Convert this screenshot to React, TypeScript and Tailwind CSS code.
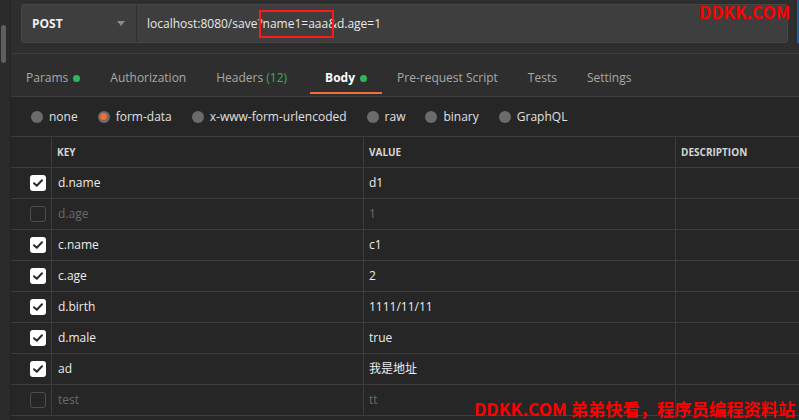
import React from "react";

const rows = [
  { on: true, k: "d.name", v: "d1" },
  { on: false, k: "d.age", v: "1" },
  { on: true, k: "c.name", v: "c1" },
  { on: true, k: "c.age", v: "2" },
  { on: true, k: "d.birth", v: "1111/11/11" },
  { on: true, k: "d.male", v: "true" },
  { on: true, k: "ad", v: "我是地址" },
  { on: false, k: "test", v: "tt" },
];

const Dot = () => <span className="inline-block w-[7px] h-[7px] rounded-full bg-[#2fb55b] ml-[5px]" />;

function Radio({ label, selected }: { label: string; selected?: boolean }) {
  return (
    <div className="flex items-center gap-[6px]">
      <span className="w-[12px] h-[12px] rounded-full bg-[#6b6b6b] flex items-center justify-center">
        {selected && <span className="w-[7px] h-[7px] rounded-full bg-[#f26b3a]" />}
      </span>
      <span className="text-[#e0e0e0]">{label}</span>
    </div>
  );
}

function Check({ on }: { on: boolean }) {
  if (!on)
    return <span className="block w-[16px] h-[16px] rounded-[3px] border border-[#4e4e4e]" />;
  return (
    <span className="flex w-[16px] h-[16px] rounded-[3px] bg-white items-center justify-center">
      <svg width="10" height="8" viewBox="0 0 10 8">
        <path d="M1 4.2 L3.8 6.8 L9 1.2" stroke="#2b2b2b" strokeWidth="2" fill="none" strokeLinecap="round" strokeLinejoin="round" />
      </svg>
    </span>
  );
}

export default function App() {
  return (
    <div
      className="w-[799px] h-[420px] flex bg-[#2e2e2e] overflow-hidden relative text-[12px] leading-none"
      style={{ fontFamily: "'Open Sans', 'Noto Sans CJK SC', sans-serif" }}
    >
      <div className="w-[11px] shrink-0 bg-[#2b2b2b] border-r border-[#232323] relative">
        <div className="absolute left-[1px] top-[25px] w-[5px] h-[38px] rounded-full bg-[#5e5e5e]" />
      </div>
      <div className="flex-1 flex flex-col min-w-0">
        <div className="h-[54px] border-b border-[#3c3c3c] pt-[4px] pl-[10px] pr-[11px]">
          <div className="h-[39px] flex bg-[#3e3e3e] border border-[#464646] rounded-[3px]">
            <div className="w-[115px] flex items-center justify-between pl-[10px] pr-[11px] border-r border-[#2f2f2f]">
              <span className="font-bold text-[#f0f0f0] text-[12px]">POST</span>
              <svg width="8" height="5" viewBox="0 0 8 5"><path d="M0 0 H8 L4 5 Z" fill="#8a8a8a" /></svg>
            </div>
            <div className="flex items-center pl-[10px] text-[#e8e8e8] relative">
              <span>localhost:8080/save?name1=aaa&amp;d.age=1</span>
              <div className="absolute left-[122px] top-[5px] w-[75px] h-[28px] border-2 border-[#ff1a1a]" />
            </div>
          </div>
        </div>
        <div className="h-[43px] border-b border-[#3c3c3c] flex text-[#a9a9a9] text-[12px]">
          <div className="px-[15px] flex items-center pt-[6px]">Params<Dot /></div>
          <div className="px-[15px] flex items-center pt-[6px]">Authorization</div>
          <div className="pl-[15px] pr-[23px] flex items-center pt-[6px]">Headers&nbsp;<span className="text-[#2fb55b]">(12)</span></div>
          <div className="px-[15px] flex items-center pt-[6px] relative text-white font-bold">
            Body<Dot />
            <div className="absolute left-0 right-0 bottom-[2px] h-[2px] bg-[#f26b3a]" />
          </div>
          <div className="px-[15px] flex items-center pt-[6px]">Pre-request Script</div>
          <div className="px-[15px] flex items-center pt-[6px]">Tests</div>
          <div className="px-[15px] flex items-center pt-[6px]">Settings</div>
        </div>
        <div className="h-[40px] border-b border-[#3c3c3c] bg-[#262626] flex items-center pl-[20px] gap-[20px]">
          <Radio label="none" />
          <Radio label="form-data" selected />
          <Radio label="x-www-form-urlencoded" />
          <Radio label="raw" />
          <Radio label="binary" />
          <Radio label="GraphQL" />
        </div>
        <div className="flex-1 bg-[#262626]">
          <div className="h-[31px] border-b border-[#3c3c3c] flex text-[10px] font-bold text-[#d6d6d6]">
            <div className="w-[41px] border-r border-[#3c3c3c]" />
            <div className="w-[312px] border-r border-[#3c3c3c] flex items-center pl-[5px]">KEY</div>
            <div className="w-[312px] border-r border-[#3c3c3c] flex items-center pl-[5px]">VALUE</div>
            <div className="flex-1 flex items-center pl-[5px]">DESCRIPTION</div>
          </div>
          {rows.map((r, i) => (
            <div key={i} className={`h-[31px] border-b border-[#3c3c3c] flex ${r.on ? "text-[#ececec]" : "text-[#6a6a6a]"}`}>
              <div className="w-[41px] border-r border-[#3c3c3c] flex items-center pl-[19px]">
                <Check on={r.on} />
              </div>
              <div className="w-[312px] border-r border-[#3c3c3c] flex items-center pl-[6px]">{r.k}</div>
              <div className="w-[312px] border-r border-[#3c3c3c] flex items-center pl-[5px]">{r.v}</div>
              <div className="flex-1" />
            </div>
          ))}
        </div>
      </div>
      <div className="absolute right-0 top-0 w-[2px] h-[43px] bg-[#1f5f9e]" />
      <div
        className="absolute left-[699px] top-[3px] text-[17px] font-bold text-[#ff0000] leading-none whitespace-nowrap"
        style={{ fontFamily: "'Noto Sans CJK SC', sans-serif" }}
      >
        DDKK.COM
      </div>
      <div
        className="absolute left-[474px] top-[400px] text-[17.3px] font-bold text-[#ff0000] leading-none whitespace-nowrap"
        style={{ fontFamily: "'Noto Sans CJK SC', sans-serif" }}
      >
        DDKK.COM 弟弟快看，程序员编程资料站
      </div>
    </div>
  );
}
